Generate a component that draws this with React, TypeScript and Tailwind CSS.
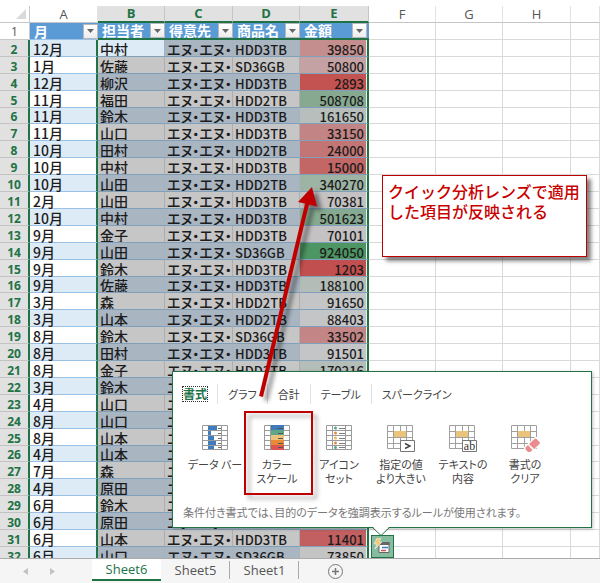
import { useState } from 'react';
import clsx from 'clsx';

interface Sale {
  month: string;
  person: string;
  product?: string;
  amount?: number;
  heat: string;
}

const CUSTOMER = 'エヌ・エヌ・エヌ';

const headers = ['月', '担当者', '得意先', '商品名', '金額'];

const sales: Sale[] = [
  { month: '12月', person: '中村', product: 'HDD3TB', amount: 39850, heat: 'bg-[#c48e8e]' },
  { month: '1月', person: '佐藤', product: 'SD36GB', amount: 50800, heat: 'bg-[#c4a1a2]' },
  { month: '12月', person: '柳沢', product: 'HDD3TB', amount: 2893, heat: 'bg-[#c25351]' },
  { month: '11月', person: '福田', product: 'HDD2TB', amount: 508708, heat: 'bg-[#86a990]' },
  { month: '11月', person: '鈴木', product: 'HDD3TB', amount: 161650, heat: 'bg-[#b7bebb]' },
  { month: '11月', person: '山口', product: 'HDD3TB', amount: 33150, heat: 'bg-[#c38485]' },
  { month: '10月', person: '田村', product: 'HDD2TB', amount: 24000, heat: 'bg-[#c37576]' },
  { month: '10月', person: '中村', product: 'HDD3TB', amount: 15000, heat: 'bg-[#c26666]' },
  { month: '10月', person: '山田', product: 'HDD2TB', amount: 340270, heat: 'bg-[#9db3a4]' },
  { month: '2月', person: '山田', product: 'HDD3TB', amount: 70381, heat: 'bg-[#c5c2c3]' },
  { month: '10月', person: '中村', product: 'HDD3TB', amount: 501623, heat: 'bg-[#86a991]' },
  { month: '9月', person: '金子', product: 'HDD3TB', amount: 70101, heat: 'bg-[#c5c2c3]' },
  { month: '9月', person: '山田', product: 'SD36GB', amount: 924050, heat: 'bg-[#4d9562]' },
  { month: '9月', person: '鈴木', product: 'HDD3TB', amount: 1203, heat: 'bg-[#c24f4f]' },
  { month: '9月', person: '佐藤', product: 'HDD3TB', amount: 188100, heat: 'bg-[#b3bcb7]' },
  { month: '3月', person: '森', product: 'HDD2TB', amount: 91650, heat: 'bg-[#c4c5c6]' },
  { month: '3月', person: '山本', product: 'HDD2TB', amount: 88403, heat: 'bg-[#c4c5c6]' },
  { month: '8月', person: '鈴木', product: 'SD36GB', amount: 33502, heat: 'bg-[#c38586]' },
  { month: '8月', person: '田村', product: 'HDD3TB', amount: 91501, heat: 'bg-[#c4c5c6]' },
  { month: '8月', person: '金子', product: 'HDD3TB', amount: 170216, heat: 'bg-[#b5bdb9]' },
  { month: '3月', person: '鈴木', heat: 'bg-[#c4c5c6]' },
  { month: '4月', person: '山口', heat: 'bg-[#c4c5c6]' },
  { month: '8月', person: '山口', heat: 'bg-[#c4c5c6]' },
  { month: '8月', person: '山本', heat: 'bg-[#c4c5c6]' },
  { month: '4月', person: '山本', heat: 'bg-[#c4c5c6]' },
  { month: '7月', person: '森', heat: 'bg-[#c4c5c6]' },
  { month: '4月', person: '原田', heat: 'bg-[#c4c5c6]' },
  { month: '6月', person: '鈴木', heat: 'bg-[#c4c5c6]' },
  { month: '6月', person: '原田', product: 'HDD3TB', amount: 157818, heat: 'bg-[#b7bebb]' },
  { month: '6月', person: '山本', product: 'HDD3TB', amount: 11401, heat: 'bg-[#c26061]' },
  { month: '6月', person: '山口', product: 'SD36GB', amount: 73850, heat: 'bg-[#c5c4c5]' },
];

const analysisTabs = ['書式', 'グラフ', '合計', 'テーブル', 'スパークライン'];

function FilterButton({ label }: { label: string }) {
  return (
    <button
      type="button"
      aria-label={`${label}のフィルター`}
      className="flex h-[15px] w-[15px] shrink-0 items-center justify-center border border-[#b4b8bd] bg-linear-to-b from-white to-[#ececec]"
    >
      <svg width="7" height="4" viewBox="0 0 7 4">
        <path d="M0 0h7L3.5 4z" fill="#666" />
      </svg>
    </button>
  );
}

// Small 3x5 sheet used as the base of the first gallery icons
function SheetLines() {
  return (
    <path
      d="M.5 .5h25v24H.5zM.5 5.5h25M.5 10.5h25M.5 15.5h25M.5 20.5h25M6.5 .5v24M19.5 .5v24"
      fill="#fff"
      stroke="#9a9a9a"
    />
  );
}

function DataBarIcon() {
  return (
    <svg width="26" height="25" viewBox="0 0 26 25">
      <SheetLines />
      <path d="M6 1h9v4H6zM6 6h3v4H6zM6 11h6v4H6zM6 16h8v4H6zM6 21h6v3H6z" fill="#3f7cbd" />
      <path d="M16 3.5h3M16 8.5h3M16 13.5h3M16 18.5h3M16 22.5h3" stroke="#6b6b6b" />
    </svg>
  );
}

function ColorScaleIcon() {
  return (
    <svg width="26" height="25" viewBox="0 0 26 25">
      <SheetLines />
      <path d="M7 0h13v5H7z" fill="#4079b8" />
      <path d="M7 5h13v5H7z" fill="#5fa588" />
      <path d="M7 10h13v5H7z" fill="#ecc379" />
      <path d="M7 15h13v5H7z" fill="#e68a35" />
      <path d="M7 20h13v5H7z" fill="#dc5552" />
      <path d="M14 3.5h5M14 8.5h5M14 13.5h5M14 18.5h5M14 22.5h5" stroke="#555" />
    </svg>
  );
}

function IconSetIcon() {
  return (
    <svg width="26" height="25" viewBox="0 0 26 25">
      <SheetLines />
      <circle cx="9.5" cy="3" r="1.5" fill="#56a584" />
      <circle cx="9.5" cy="8" r="1.5" fill="#e8893a" />
      <circle cx="9.5" cy="13" r="1.5" fill="#ecb260" />
      <circle cx="9.5" cy="18" r="1.5" fill="#e8893a" />
      <circle cx="9.5" cy="22.5" r="1.5" fill="#56a584" />
      <path d="M13 3.5h6M13 8.5h6M13 13.5h6M13 18.5h6M13 22.5h6" stroke="#7d7d7d" />
    </svg>
  );
}

function HighlightSheet() {
  return (
    <>
      <path
        d="M.5 .5h25v23H.5zM.5 6.5h25M.5 12.5h25M.5 18.5h25M6.5 .5v23M13.5 .5v23M19.5 .5v23"
        fill="#fff"
        stroke="#a0a0a0"
      />
      <path d="M7 6h12v6H7z" fill="#ebc47c" />
    </>
  );
}

function GreaterThanIcon() {
  return (
    <svg width="29" height="28" viewBox="0 0 29 28">
      <HighlightSheet />
      <path d="M13.5 15.5h14v11h-14z" fill="#fff" stroke="#777" />
      <path d="M18 18.5l5 2.5-5 2.5" fill="none" stroke="#444" strokeWidth="1.4" />
    </svg>
  );
}

function TextContainsIcon() {
  return (
    <svg width="29" height="28" viewBox="0 0 29 28">
      <HighlightSheet />
      <path d="M13.5 15.5h14v11h-14z" fill="#fff" stroke="#777" />
      <text x="20.5" y="25" textAnchor="middle" fontSize="12" fontFamily="Liberation Serif, serif" fill="#333">
        ab
      </text>
    </svg>
  );
}

function ClearFormatIcon() {
  return (
    <svg width="29" height="28" viewBox="0 0 29 28">
      <HighlightSheet />
      <path d="M13 22l11-10h5v8L19 28h-6z" fill="#fff" />
      <path d="M18 19l5.500-5q1-.8 2 0l3 3q.8 1 0 2L23 24z" fill="#e88c90" />
      <path d="M17 20l4.500 5L19 27h-2l-2.500-2.500v-2z" fill="#e88c90" />
    </svg>
  );
}

const gallery = [
  { lines: ['データ バー'], Icon: DataBarIcon },
  { lines: ['カラー', 'スケール'], Icon: ColorScaleIcon },
  { lines: ['アイコン', 'セット'], Icon: IconSetIcon },
  { lines: ['指定の値', 'より大きい'], Icon: GreaterThanIcon },
  { lines: ['テキストの', '内容'], Icon: TextContainsIcon },
  { lines: ['書式の', 'クリア'], Icon: ClearFormatIcon },
];

function BlankCells() {
  return (
    <>
      {['F', 'G', 'H', 'I'].map((col) => (
        <td key={col} className="border-r border-b border-[#d9d9d9] p-0" />
      ))}
    </>
  );
}

function SalesTable() {
  return (
    <table className="w-full table-fixed border-separate border-spacing-0 text-[14px] leading-[13px] font-medium whitespace-nowrap text-[#1c1c1c] [font-feature-settings:'palt']">
      <colgroup>
        <col className="w-[30px]" />
        <col className="w-[68px]" />
        <col className="w-[67px]" />
        <col className="w-[68px]" />
        <col className="w-[67px]" />
        <col className="w-[69px]" />
        <col className="w-[67px]" />
        <col className="w-[67px]" />
        <col className="w-[68px]" />
        <col />
      </colgroup>
      <thead className="font-['Open_Sans','Noto_Sans',sans-serif] text-[13px] leading-[15px]">
        <tr className="h-[17px]">
          <td className="border-r border-b border-[#c8c8c8] p-0">
            <svg className="mr-[3px] ml-auto" width="10" height="10" viewBox="0 0 10 10">
              <path d="M10 0v10H0z" fill="#dadada" />
            </svg>
          </td>
          {['A', 'B', 'C', 'D', 'E', 'F', 'G', 'H', ''].map((col) => {
            const selected = col !== '' && 'BCDE'.includes(col);
            return (
              <th
                key={col}
                scope="col"
                className={clsx(
                  'border-r p-0',
                  selected
                    ? 'border-b-2 border-r-[#c6c6c6] border-b-[#217346] bg-[#e1e1e1] font-bold text-[#217346]'
                    : 'border-b border-r-[#e2e2e2] border-b-[#c4c4c4] font-normal text-[#555]',
                )}
              >
                {col}
              </th>
            );
          })}
        </tr>
      </thead>
      <tbody>
        <tr className="h-[17px] leading-[15px]">
          <th
            scope="row"
            className="border-r border-b border-[#c8c8c8] p-0 text-center font-['Open_Sans','Noto_Sans',sans-serif] text-[12px] font-normal text-[#555]"
          >
            1
          </th>
          {headers.map((label, i) => (
            <th
              key={label}
              scope="col"
              className={clsx(
                'bg-[#5b9bd5] p-0 text-left font-bold text-white',
                i === 0 ? 'border-b border-[#9bc2e6]' : 'border-b-2 border-[#217346]',
                i === 4 && 'pr-[2px]',
              )}
            >
              <div className="flex items-center justify-between pl-1">
                {label}
                <FilterButton label={label} />
              </div>
            </th>
          ))}
          <BlankCells />
        </tr>
        {sales.map((sale, i) => {
          const row = i + 2;
          const banded = i % 2 === 0;
          const selectedCell = clsx(
            'overflow-hidden border-r border-b border-b-[#7f9fba] pt-[2px] pr-0 pb-0 pl-[2px] align-bottom',
            banded ? 'border-r-[#a3b3c1] bg-[#a9b5c1]' : 'border-r-[#adadad] bg-[#c6c6c6]',
          );
          return (
            // At this zoom level every tenth row is one pixel shorter
            <tr key={row} className={row % 10 === 6 ? 'h-[16px]' : 'h-[17px]'}>
              <th
                scope="row"
                className="border-r-2 border-b border-r-[#217346] border-b-[#c3c3c3] bg-[#e1e1e1] px-0 pt-[2px] pb-0 text-center align-bottom font-['Open_Sans','Noto_Sans',sans-serif] text-[12px] font-bold text-[#217346]"
              >
                {row}
              </th>
              <td
                className={clsx(
                  'border-r-2 border-b border-r-[#217346] border-b-[#9bc2e6] pt-[2px] pr-0 pb-0 pl-[3px] align-bottom',
                  banded ? 'bg-[#ddebf7]' : 'bg-white',
                )}
              >
                {sale.month}
              </td>
              <td className={clsx(selectedCell, row === 2 && 'bg-[#ddebf7]!')}>{sale.person}</td>
              <td className={selectedCell}>{CUSTOMER}</td>
              <td className={clsx(selectedCell, 'text-[13px]')}>{sale.product}</td>
              <td
                className={clsx(
                  'border-r-2 border-b border-r-[#217346] border-b-[#7f9fba] pt-[2px] pr-[3px] pb-0 pl-0 text-right align-bottom text-[13px] shadow-[inset_-1px_0_0_#e8f0ea]',
                  sale.heat,
                )}
              >
                {sale.amount}
              </td>
              <BlankCells />
            </tr>
          );
        })}
      </tbody>
    </table>
  );
}

function QuickAnalysis() {
  const [active, setActive] = useState('書式');

  return (
    <section
      aria-label="クイック分析"
      className="absolute top-[371px] left-[172px] w-[420px] border border-[#217346] bg-white pb-2 text-[11px] leading-[14px] text-[#444] shadow-[1px_1px_3px_rgba(0,0,0,0.25)] [font-feature-settings:'palt']"
    >
      <div role="tablist" className="flex items-center pt-3 pl-[10px]">
        {analysisTabs.map((tab) => (
          <button
            key={tab}
            type="button"
            role="tab"
            aria-selected={tab === active}
            onClick={() => setActive(tab)}
            className="flex h-5 items-center border-r border-[#e1e1e1] px-[10px] first:pl-0 last:border-r-0"
          >
            <span
              className={clsx(
                tab === active && 'text-[12px] font-bold text-[#217346] outline-1 outline-[#333] outline-dotted',
              )}
            >
              {tab}
            </span>
          </button>
        ))}
      </div>

      <div className="flex pt-[21px] pl-[11px]">
        {gallery.map(({ lines, Icon }) => (
          <button key={lines[0]} type="button" className="flex h-[74px] w-[62px] flex-col items-center">
            <span className="flex h-8 items-start">
              <Icon />
            </span>
            {lines.map((line) => (
              <span key={line} className="whitespace-nowrap">
                {line}
              </span>
            ))}
          </button>
        ))}
      </div>

      <p className="pt-[6px] pl-[10px] text-[#777]">
        条件付き書式では、目的のデータを強調表示するルールが使用されます。
      </p>

      {/* Pointer down to the lens button */}
      <svg className="absolute top-full left-[199px]" width="18" height="9" viewBox="0 0 18 9">
        <path d="M0 -1L9 8L18 -1z" fill="#fff" />
        <path d="M0 0L9 8.500L18 0" fill="none" stroke="#217346" />
      </svg>
    </section>
  );
}

function LensButton() {
  return (
    <button
      type="button"
      aria-label="クイック分析レンズ"
      className="absolute top-[535px] left-[371px] flex h-[23px] w-[23px] items-center justify-center border border-[#217346] bg-[#86bc9f]"
    >
      <svg width="17" height="17" viewBox="0 0 17 17">
        <path d="M5 4.500h10v10H5z" fill="#fff" stroke="#666" />
        <path d="M5 4h10.500v3H5z" fill="#666" />
        <path d="M8 9.500h6" stroke="#3f7cbd" strokeWidth="1.500" />
        <path d="M7 12.500h5" stroke="#d9534f" strokeWidth="1.500" />
        <path d="M3 0h4L5 4h3L1 11l2-5H0z" fill="#f4c877" stroke="#fff" strokeWidth=".5" />
      </svg>
    </button>
  );
}

function Annotations() {
  return (
    <>
      <p className="absolute top-[175px] left-[382px] h-[82px] w-[205px] border border-[#c00000] bg-white pt-[5px] pl-[5px] text-[16px] leading-5 font-medium text-[#c80000] shadow-[4px_4px_4px_rgba(0,0,0,0.5)]">
        クイック分析レンズで適用
        <br />
        した項目が反映される
      </p>
      <div className="pointer-events-none absolute top-[411px] left-[244px] h-[84px] w-[69px] border-2 border-[#c00000] drop-shadow-[4px_4px_2px_rgba(0,0,0,0.35)]" />
      <svg
        className="pointer-events-none absolute top-[180px] left-[250px] drop-shadow-[5px_4px_2px_rgba(0,0,0,0.45)]"
        width="80"
        height="225"
        viewBox="0 0 80 225"
      >
        <path d="M57.500 22L11 216.500" stroke="#c00000" strokeWidth="4" />
        <path d="M62 7L48 22L67 26.500z" fill="#c00000" />
      </svg>
    </>
  );
}

function SheetTabs() {
  const [active, setActive] = useState('Sheet6');

  return (
    <footer className="flex h-[25px] shrink-0 items-start border-t border-[#ababab] bg-[#f5f5f5] font-['Open_Sans','Noto_Sans',sans-serif] text-[13px] text-[#555]">
      <div className="flex h-6 w-[92px] items-center gap-[22px] pl-[23px]">
        <button type="button" aria-label="前のシート">
          <svg width="5" height="7" viewBox="0 0 5 7">
            <path d="M5 0v7L0 3.500z" fill="#c2c2c2" />
          </svg>
        </button>
        <button type="button" aria-label="次のシート">
          <svg width="5" height="7" viewBox="0 0 5 7">
            <path d="M0 0v7L5 3.500z" fill="#c2c2c2" />
          </svg>
        </button>
      </div>
      {['Sheet6', 'Sheet5', 'Sheet1'].map((name) => (
        <button
          key={name}
          type="button"
          onClick={() => setActive(name)}
          className={clsx(
            'flex h-[22px] w-[69px] items-center justify-center pt-[2px]',
            name === active
              ? 'border-b-2 border-[#217346] bg-white text-[#217346]'
              : 'bg-linear-to-r from-[#ababab] to-[#ababab] bg-size-[1px_18px] bg-position-[right_center] bg-no-repeat',
          )}
        >
          {name}
        </button>
      ))}
      <button type="button" aria-label="新しいシート" className="ml-7 flex h-6 items-center">
        <svg width="17" height="17" viewBox="0 0 17 17" fill="none" stroke="#777">
          <circle cx="8.500" cy="8.500" r="7" />
          <path d="M8.500 5v7M5 8.500h7" strokeWidth="1.500" />
        </svg>
      </button>
    </footer>
  );
}

export default function App() {
  return (
    <div className="flex h-screen flex-col bg-white font-['Noto_Sans_CJK_JP',sans-serif]">
      <main className="relative min-h-0 flex-1 overflow-hidden pt-[6px]">
        <SalesTable />
        <QuickAnalysis />
        <LensButton />
        <Annotations />
      </main>
      <SheetTabs />
    </div>
  );
}
